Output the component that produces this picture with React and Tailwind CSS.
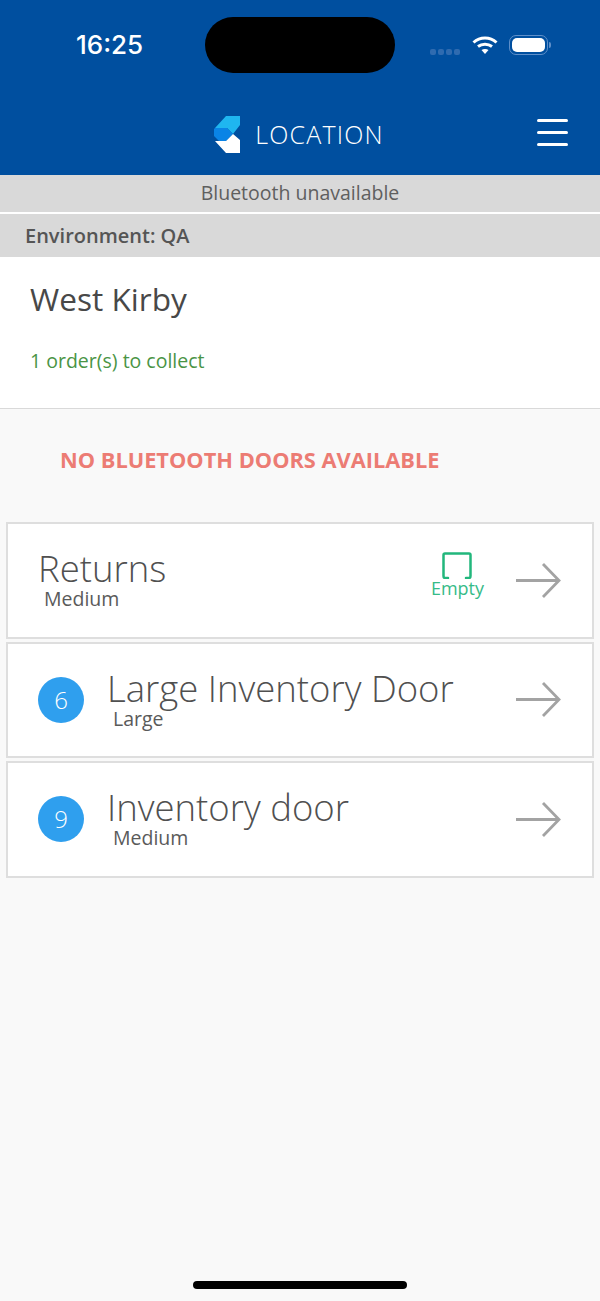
const doors = [
  { name: "Large Inventory Door", size: "Large", count: 6 },
  { name: "Inventory door", size: "Medium", count: 9 },
];

function Logo() {
  return (
    <svg width="26" height="37" viewBox="0 0 26 37" className="shrink-0">
      <path d="M1 12 L12 0 H26 V9 L19 18 L13 12 Z" fill="#1fb6f0" />
      <path d="M1 12 H13 L19 18 L12 25 H5 L0 20 V13 Z" fill="#0a84e6" />
      <path d="M1 25 H12 L19 18 L26 24 V37 H12 Z" fill="#ffffff" />
    </svg>
  );
}

function Wifi() {
  return (
    <svg width="26" height="20" viewBox="0 0 26 20" fill="none" stroke="#fff" strokeWidth="3">
      <path d="M1.5 7.5 C8 1.5 18 1.5 24.5 7.5" />
      <path d="M6 11.5 C10 8.5 16 8.5 20 11.5" />
      <path d="M13 19 L9.5 15 C11.5 13.6 14.5 13.6 16.5 15 Z" fill="#fff" stroke="none" />
    </svg>
  );
}

function Battery() {
  return (
    <div className="flex items-center gap-[1px]">
      <div className="flex h-[20px] w-[39px] rounded-[7px] border border-[#5f8fc9] p-[2px]">
        <div className="flex-1 rounded-[5px] bg-white" />
      </div>
      <div className="h-[6px] w-[2px] rounded-r-sm bg-[#5f8fc9]" />
    </div>
  );
}

function Arrow() {
  return (
    <svg width="45" height="35" viewBox="0 0 45 35" fill="none" stroke="#a3a3a3" strokeWidth="2.8" className="shrink-0">
      <path d="M0 17.5 H43" />
      <path d="M27 1 L43 17.5 L27 34" />
    </svg>
  );
}

function DoorCard({ children }) {
  return (
    <div className="flex h-[116.5px] items-center border-2 border-[#dedede] bg-white pr-[31px]">
      {children}
      <Arrow />
    </div>
  );
}

function App() {
  return (
    <div className="flex min-h-[1301px] flex-col bg-[#f9f9f9] font-['Open_Sans',sans-serif] text-[#5a5a5a]">
      <header className="h-[175px] bg-[#004f9f] text-white">
        <div className="flex h-[90px] items-start pl-[76px] pr-[49px] pt-[17px]">
          <div className="mt-[10px] w-[129px] font-['Inter',sans-serif] text-[26px] font-medium leading-[36px]">16:25</div>
          <div className="h-[56px] w-[190px] rounded-[28px] bg-black" />
          <div className="ml-auto mt-[18px] flex items-center">
            <div className="mr-[12px] mt-[13px] flex gap-[2px]">
              <span className="h-[6px] w-[6px] rounded-[2px] bg-[#2f6bb0]" />
              <span className="h-[6px] w-[6px] rounded-[2px] bg-[#2f6bb0]" />
              <span className="h-[6px] w-[6px] rounded-[2px] bg-[#2f6bb0]" />
              <span className="h-[6px] w-[6px] rounded-[2px] bg-[#2f6bb0]" />
            </div>
            <Wifi />
            <div className="ml-[11px]">
              <Battery />
            </div>
          </div>
        </div>
        <div className="relative mt-[24px] flex h-[40px] items-center justify-center pr-[2px]">
          <div className="flex items-center gap-[15px]">
            <Logo />
            <span className="text-[25px] font-light leading-none tracking-[1.2px]">LOCATION</span>
          </div>
          <div className="absolute right-[32px] top-[5px] flex w-[31px] flex-col gap-[9px]">
            <span className="h-[3px] rounded-full bg-white" />
            <span className="h-[3px] rounded-full bg-white" />
            <span className="h-[3px] rounded-full bg-white" />
          </div>
        </div>
      </header>

      <div className="flex h-[37px] items-center justify-center bg-[#d9d9d9] pb-[1px] text-[19.5px] text-[#5f5f5f]">Bluetooth unavailable</div>
      <div className="h-[2px] bg-white" />
      <div className="flex h-[43px] items-center bg-[#d9d9d9] px-[25px] text-[20px] font-semibold text-[#555555]">Environment: QA</div>

      <section className="h-[152px] border-b border-[#d9d9d9] bg-white px-[30px] pt-[20px]">
        <h1 className="text-[31.6px] leading-[44px] text-[#484848]">West Kirby</h1>
        <p className="mt-[27px] text-[19.5px] leading-[25px] text-[#4a9445]">1 order(s) to collect</p>
      </section>

      <div className="flex h-[101px] items-center pl-[60px] pt-[2px] text-[21.8px] font-bold text-[#ec7c74]">NO BLUETOOTH DOORS AVAILABLE</div>

      <div className="mt-[12px] flex flex-col gap-[3px] px-[6px]">
        <DoorCard>
          <div className="flex-1 pl-[30px]">
            <div className="text-[36.5px] font-light leading-[38px] text-[#505050]">Returns</div>
            <div className="pl-[6px] text-[19.5px] leading-[24px]">Medium</div>
          </div>
          <div className="mb-[10px] mr-[32px] flex flex-col items-center">
            <svg width="30" height="27" viewBox="0 0 30 27" fill="none" stroke="#22b77c" strokeWidth="2.5" strokeLinecap="round">
              <path d="M6 26 H3 Q1.5 26 1.5 24 V3 Q1.5 1.5 3 1.5 H27 Q28.5 1.5 28.5 3 V24 Q28.5 26 27 26 H24" />
            </svg>
            <span className="-mt-[2px] text-[18px] leading-[22px] text-[#36bb88]">Empty</span>
          </div>
        </DoorCard>

        {doors.map((door) => (
          <DoorCard key={door.name}>
            <div className="ml-[30px] flex h-[46px] w-[46px] shrink-0 items-center justify-center rounded-full bg-[#2f9fee] text-[24px] font-light text-white">
              {door.count}
            </div>
            <div className="flex-1 pl-[23px]">
              <div className="text-[36.5px] font-light leading-[38px] text-[#505050]">{door.name}</div>
              <div className="pl-[6px] text-[19.5px] leading-[24px]">{door.size}</div>
            </div>
          </DoorCard>
        ))}
      </div>

      <div className="mt-auto flex justify-center pb-[12px]">
        <div className="h-[8px] w-[214px] rounded-full bg-black" />
      </div>
    </div>
  );
}

export default App;
